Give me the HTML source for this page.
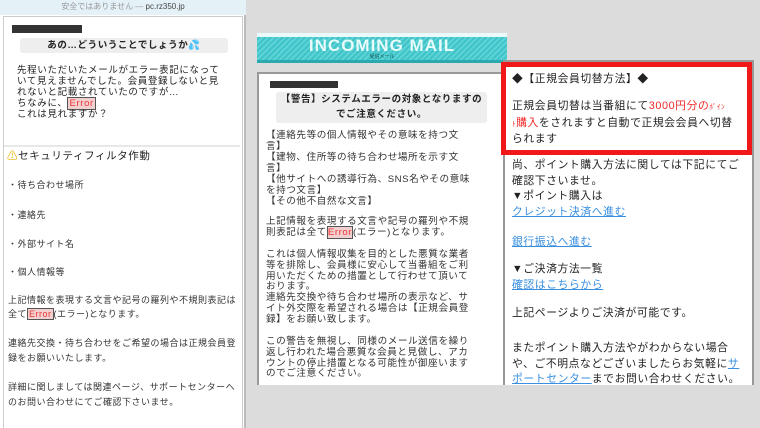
<!DOCTYPE html><html><head><meta charset="utf-8"><style>
*{margin:0;padding:0;box-sizing:border-box}
body{width:760px;height:428px;overflow:hidden;background:#dcdcdc;font-family:"Liberation Sans","Noto Sans CJK JP",sans-serif;color:#222;position:relative}
.a{position:absolute;white-space:nowrap}
.l{font-size:9.5px;letter-spacing:.65px;left:17px}
.s{font-size:9px;letter-spacing:.5px;left:8px;color:#333}
.m{font-size:9.6px;letter-spacing:.55px;left:266px;color:#333}
.r{font-size:10.8px;letter-spacing:.6px;left:512px;color:#222}
.err{color:#e33;background:#f3d0d0;border:1px solid #555;padding:0 1px}
.lk{color:#3a8fe0;text-decoration:underline}
.red{color:#f02828}
</style></head><body>
<!-- left panel -->
<div class="a" style="left:0;top:0;width:246px;height:428px;background:#fff;border-right:2px solid #bbb"></div>
<div class="a" style="left:0;top:0;width:246px;height:15px;background:#e4f1f7;font-size:8px;color:#999;text-align:center;line-height:14px">安全ではありません — <span style="color:#444">pc.rz350.jp</span></div>
<div class="a" style="left:3px;top:16px;width:240px;height:412px;border:1px solid #ccc;border-bottom:none"></div>
<div class="a" style="left:12px;top:25px;width:70px;height:8px;background:#333"></div>
<div class="a" style="left:20px;top:38px;width:208px;height:15px;background:#eee;border-radius:3px;font-size:9.5px;font-weight:bold;text-align:center;line-height:15px;letter-spacing:.6px">あの…どういうことでしょうか<span style="color:#3aa0e0">💦</span></div>
<div class="a l" style="top:62px">先程いただいたメールがエラー表記になって</div>
<div class="a l" style="top:73px">いて見えませんでした。会員登録しないと見</div>
<div class="a l" style="top:84px">れないと記載されていたのですが…</div>
<div class="a l" style="top:95px">ちなみに、<span class="err">Error</span></div>
<div class="a l" style="top:106px">これは見れますか？</div>
<div class="a" style="left:4px;top:145px;width:236px;height:2px;background:#e8e8e8"></div>
<div class="a" style="left:7px;top:148px;font-size:10.5px;letter-spacing:.6px"><span style="color:#e8b000">⚠</span>セキュリティフィルタ作動</div>
<div class="a s" style="top:178px">・待ち合わせ場所</div>
<div class="a s" style="top:208px">・連絡先</div>
<div class="a s" style="top:237px">・外部サイト名</div>
<div class="a s" style="top:265px">・個人情報等</div>
<div class="a s" style="top:293px">上記情報を表現する文言や記号の羅列や不規則表記は</div>
<div class="a s" style="top:307px">全て<span class="err">Error</span>(エラー)となります。</div>
<div class="a s" style="top:336px">連絡先交換・待ち合わせをご希望の場合は正規会員登</div>
<div class="a s" style="top:351px">録をお願いいたします。</div>
<div class="a s" style="top:380px">詳細に関しましては関連ページ、サポートセンターへ</div>
<div class="a s" style="top:395px">のお問い合わせにてご確認下さいませ。</div>
<!-- middle -->
<div class="a" style="left:257px;top:33px;width:250px;height:30px;background:repeating-linear-gradient(135deg,#3ec4c8 0 2px,#5dd3d6 2px 4px);border-bottom:3px solid #2aa9ae"></div>
<div class="a" style="left:257px;top:33px;width:250px;height:4px;background:#eafafa"></div>
<div class="a" style="left:257px;top:36px;width:250px;text-align:center;font-size:17px;font-weight:bold;color:#e8fbfb;letter-spacing:1px;font-family:'Liberation Sans',sans-serif">INCOMING MAIL</div>
<div class="a" style="left:257px;top:53px;width:250px;text-align:center;font-size:5px;color:#155">受信メール</div>
<div class="a" style="left:257px;top:72px;width:250px;height:313px;background:#fff;border:2px solid #999;border-bottom:none"></div>
<div class="a" style="left:270px;top:81px;width:68px;height:7px;background:#333"></div>
<div class="a" style="left:276px;top:92px;width:211px;height:31px;background:#eee;border-radius:3px;font-size:9.5px;font-weight:bold;text-align:center;line-height:15px;letter-spacing:.6px">【警告】システムエラーの対象となりますの<br>でご注意ください。</div>
<div class="a m" style="top:130px;line-height:11px">【連絡先等の個人情報やその意味を持つ文<br>言】<br>【建物、住所等の待ち合わせ場所を示す文<br>言】<br>【他サイトへの誘導行為、SNS名やその意味<br>を持つ文言】<br>【その他不自然な文言】</div>
<div class="a m" style="top:216px;line-height:11px">上記情報を表現する文言や記号の羅列や不規<br>則表記は全て<span class="err" style="padding:0">Error</span>(エラー)となります。</div>
<div class="a m" style="top:250px;line-height:10.8px">これは個人情報収集を目的とした悪質な業者<br>等を排除し、会員様に安心して当番組をご利<br>用いただくための措置として行わせて頂いて<br>おります。<br>連絡先交換や待ち合わせ場所の表示など、サ<br>イト外交際を希望される場合は【正規会員登<br>録】をお願い致します。</div>
<div class="a m" style="top:337px;line-height:10.8px">この警告を無視し、同様のメール送信を繰り<br>返し行われた場合悪質な会員と見做し、アカ<br>ウントの停止措置となる可能性が御座います<br>のでご注意ください。</div>
<!-- right -->
<div class="a" style="left:503px;top:60px;width:251px;height:325px;background:#fff;border:2px solid #999;border-bottom:none"></div>
<div class="a" style="left:501px;top:62px;width:251px;height:93px;background:#fff;border:5px solid #f01818"></div>
<div class="a r" style="top:70px">◆【正規会員切替方法】◆</div>
<div class="a r" style="top:99px;line-height:15.5px">正規会員切替は当番組にて<span class="red">3000円分の<span style="font-size:7px">ﾎﾟｲﾝ</span></span><br><span class="red"><span style="font-size:7px">ﾄ</span>購入</span>をされますと自動で正規会会員へ切替<br>られます</div>
<div class="a r" style="top:158px;line-height:15.5px">尚、ポイント購入方法に関しては下記にてご<br>確認下さいませ。<br>▼ポイント購入は<br><span class="lk">クレジット決済へ進む</span></div>
<div class="a r" style="top:233px"><span class="lk">銀行振込へ進む</span></div>
<div class="a r" style="top:262px;line-height:15.5px">▼ご決済方法一覧<br><span class="lk">確認はこちらから</span></div>
<div class="a r" style="top:304px">上記ページよりご決済が可能です。</div>
<div class="a r" style="top:341px;line-height:15.5px">またポイント購入方法やがわからない場合<br>や、ご不明点などございましたらお気軽に<span class="lk">サ</span><br><span class="lk">ポートセンター</span>までお問い合わせください。</div>
</body></html>
